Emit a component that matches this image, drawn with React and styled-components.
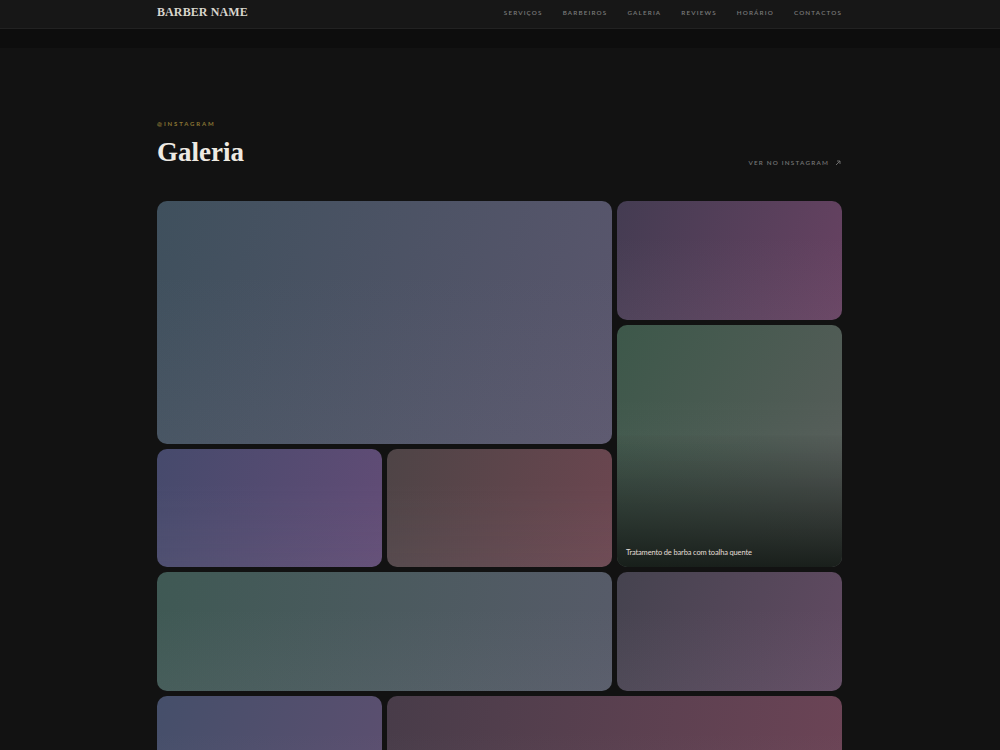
import React from 'react'
import styled, { createGlobalStyle } from 'styled-components'

const GlobalStyle = createGlobalStyle`
  html, body {
    margin: 0;
    padding: 0;
    background: #121212;
  }
  body {
    font-family: "Lato", "Liberation Sans", sans-serif;
    color: #e8e4dc;
  }
  * { box-sizing: border-box; }
`;

const NavBar = styled.header`
  height: 29px;
  background: #171717;
  border-bottom: 1px solid #222222;
`;

const NavInner = styled.div`
  width: 685px;
  height: 100%;
  margin-left: calc(50% - 343px);
  display: flex;
  align-items: center;
  justify-content: space-between;
`;

const Brand = styled.div`
  font-family: "Liberation Serif", serif;
  font-weight: 700;
  font-size: 12px;
  letter-spacing: 0.1px;
  color: #d9d5cd;
  margin-top: -4px;
`;

const NavLinks = styled.nav`
  display: flex;
  gap: 20px;
  margin-top: -3px;
`;

const NavLink = styled.a`
  font-size: 6.3px;
  font-weight: 600;
  letter-spacing: 1.15px;
  color: #7a7a7a;
  text-decoration: none;
`;

const Band = styled.div`
  height: 19px;
  background: #0d0d0d;
`;

const Section = styled.section`
  width: 685px;
  margin-left: calc(50% - 343px);
  padding-top: 72px;
`;

const Head = styled.div`
  display: flex;
  justify-content: space-between;
  align-items: flex-end;
  margin-bottom: 35px;
`;

const Eyebrow = styled.div`
  font-size: 6px;
  font-weight: 700;
  letter-spacing: 1.85px;
  color: #8a7634;
  margin-bottom: 11px;
`;

const Title = styled.h2`
  margin: 0;
  font-family: "Liberation Serif", serif;
  font-weight: 700;
  font-size: 27px;
  line-height: 28px;
  color: #eeeae2;
  letter-spacing: 0;
`;

const MoreLink = styled.a`
  display: flex;
  align-items: center;
  gap: 6px;
  font-size: 6.3px;
  font-weight: 600;
  letter-spacing: 1.2px;
  color: #757575;
  text-decoration: none;
  margin-bottom: 0;
  margin-right: 1px;
`;

const Grid = styled.div`
  display: grid;
  grid-template-columns: repeat(3, 1fr);
  grid-auto-rows: 118.75px;
  gap: 5px;
`;

const Tile = styled.div`
  position: relative;
  border-radius: 10px;
  overflow: hidden;
  grid-column: span ${p => p.$cols || 1};
  grid-row: span ${p => p.$rows || 1};
  background:
    linear-gradient(to bottom, rgba(255,255,255,0) 30%, rgba(150,150,160,0.08) 100%),
    linear-gradient(${p => p.$angle || 110}deg, ${p => p.$from}, ${p => p.$to});
`;

const Shade = styled.div`
  position: absolute;
  inset: 0;
  background: linear-gradient(to bottom, rgba(10,14,12,0) 45%, rgba(16,22,18,0.88) 100%);
`;

const Caption = styled.div`
  position: absolute;
  left: 9px;
  bottom: 10px;
  font-size: 7.5px;
  font-weight: 400;
  color: #e2ded6;
  letter-spacing: -0.15px;
`;

const links = ['SERVIÇOS', 'BARBEIROS', 'GALERIA', 'REVIEWS', 'HORÁRIO', 'CONTACTOS']

const tiles = [
  { cols: 2, rows: 2, from: '#3f505d', to: '#5a566d', angle: 105 },
  { from: '#443c52', to: '#684262', angle: 110 },
  { rows: 2, from: '#3d584a', to: '#5b5e5c', angle: 120, caption: 'Tratamento de barba com toalha quente' },
  { from: '#464a6c', to: '#624c76', angle: 105 },
  { from: '#4e4446', to: '#6c4650', angle: 105 },
  { cols: 2, from: '#3f5954', to: '#575b69', angle: 100 },
  { from: '#45434f', to: '#624a62', angle: 110 },
  { from: '#454f6a', to: '#5d4f70', angle: 110 },
  { cols: 2, from: '#483c49', to: '#6c4456', angle: 100 },
]

function App() {
  return (
    <>
      <GlobalStyle />
      <NavBar>
        <NavInner>
          <Brand>BARBER NAME</Brand>
          <NavLinks>
            {links.map(l => <NavLink key={l} href="#">{l}</NavLink>)}
          </NavLinks>
        </NavInner>
      </NavBar>
      <Band />
      <Section>
        <Head>
          <div>
            <Eyebrow>@INSTAGRAM</Eyebrow>
            <Title>Galeria</Title>
          </div>
          <MoreLink href="#">
            VER NO INSTAGRAM
            <svg width="6" height="6" viewBox="0 0 6 6" fill="none" stroke="#777" strokeWidth="0.9">
              <path d="M1 5 L5 1 M2 1 H5 V4" />
            </svg>
          </MoreLink>
        </Head>
        <Grid>
          {tiles.map((t, i) => (
            <Tile key={i} $cols={t.cols} $rows={t.rows} $from={t.from} $to={t.to} $angle={t.angle}>
              {t.caption && (
                <>
                  <Shade />
                  <Caption>{t.caption}</Caption>
                </>
              )}
            </Tile>
          ))}
        </Grid>
      </Section>
    </>
  )
}

export default App
